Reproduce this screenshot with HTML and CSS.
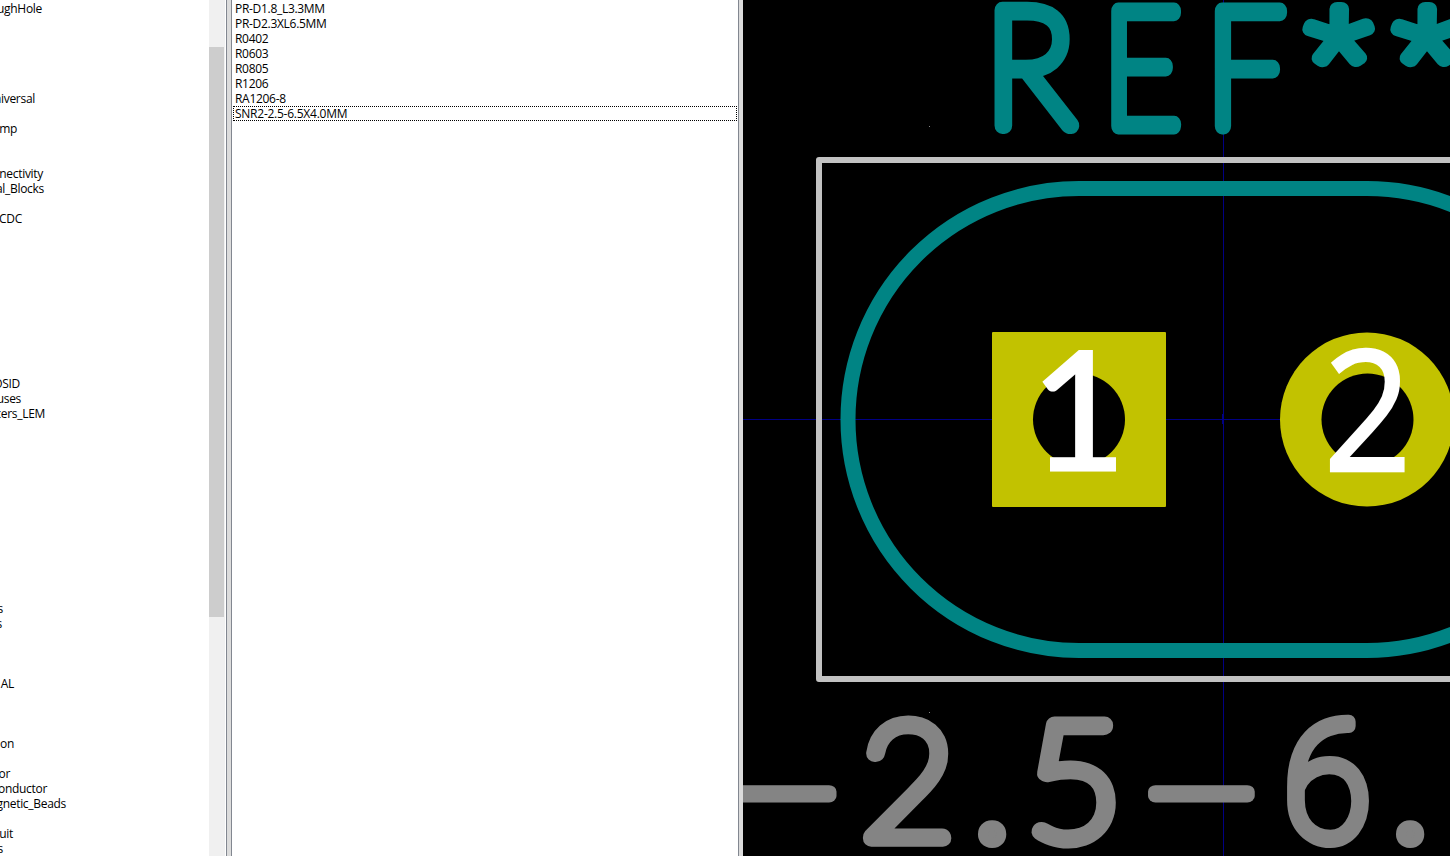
FILE: index.html
```html
<!DOCTYPE html>
<html lang="en">
<head>
<meta charset="utf-8">
<title>Footprint Library Browser</title>
<link rel="stylesheet" href="styles.css">
</head>
<body>
<main class="browser">
  <section class="libraries">
    <div class="tree">
      <div class="row" style="width:42px;grid-row:1">ughHole</div>
      <div class="row" style="width:35px;grid-row:7">niversal</div>
      <div class="row" style="width:17px;grid-row:9">mp</div>
      <div class="row" style="width:43px;grid-row:12">nectivity</div>
      <div class="row" style="width:44px;grid-row:13">al_Blocks</div>
      <div class="row" style="width:22px;grid-row:15">CDC</div>
      <div class="row" style="width:20px;grid-row:26">OSID</div>
      <div class="row" style="width:21px;grid-row:27">uses</div>
      <div class="row" style="width:45px;grid-row:28">cers_LEM</div>
      <div class="row" style="width:3px;grid-row:41">s</div>
      <div class="row" style="width:2px;grid-row:42">s</div>
      <div class="row" style="width:14px;grid-row:46">AL</div>
      <div class="row" style="width:14px;grid-row:50">on</div>
      <div class="row" style="width:10px;grid-row:52">or</div>
      <div class="row" style="width:47px;grid-row:53">onductor</div>
      <div class="row" style="width:66px;grid-row:54">gnetic_Beads</div>
      <div class="row" style="width:13px;grid-row:56">uit</div>
      <div class="row" style="width:3px;grid-row:57">s</div>
    </div>
    <div class="scrollbar"><div class="thumb"></div></div>
  </section>
  <div class="sash"></div>
  <section class="footprints">
    <div class="item">PR-D1.8_L3.3MM</div>
    <div class="item">PR-D2.3XL6.5MM</div>
    <div class="item">R0402</div>
    <div class="item">R0603</div>
    <div class="item">R0805</div>
    <div class="item">R1206</div>
    <div class="item">RA1206-8</div>
    <div class="item focused">SNR2-2.5-6.5X4.0MM</div>
  </section>
  <div class="sash right"></div>
  <svg class="canvas" viewBox="743 0 707 856" width="707" height="856">
    <g class="grid" shape-rendering="crispEdges">
      <rect x="929" y="126" width="1" height="1"/>
      <rect x="929" y="712" width="1" height="1"/>
    </g>
    <path class="axis" d="M743 419.5H1450M1223.5 0V856M1222.5 414V424" shape-rendering="crispEdges"/>
    <path class="courtyard" d="M1460 160H819V679H1460"/>
    <path class="outline" d="M1367 188.5H1079A231 231 0 0 0 1079 650.5H1367A231 231 0 0 0 1367 188.5Z"/>
    <g class="silk">
      <text class="hair" transform="translate(984.8 125.5) scale(.93 1)">R</text>
      <text class="hair" transform="translate(1102.4 125.5) scale(.83 1)">E</text>
      <text class="hair" transform="translate(1205.8 125.5) scale(.86 1)">F</text>
      <text class="star" transform="translate(1338.5 102.5) scale(.89 .8)">*</text>
      <text class="star" transform="translate(1426.5 102.5) scale(.89 .8)">*</text>
    </g>
    <g class="fab">
      <text class="dash" transform="translate(783.5 854) scale(1.15 1)">–</text>
      <text class="hair" transform="translate(860.5 838.5)">2</text>
      <text class="dot" x="993" y="841.5">.</text>
      <text class="hair" transform="translate(1026 838.5) scale(1.02 1)">5</text>
      <text class="dash" transform="translate(1201.8 854) scale(1.15 1)">–</text>
      <text transform="translate(1284 838.5) scale(.97 1)">6</text>
      <text class="dot" x="1411" y="841.5">.</text>
    </g>
    <rect class="pad" x="992" y="332" width="174" height="175" rx="1"/>
    <circle class="pad" cx="1367" cy="419.5" r="87"/>
    <circle class="hole" cx="1079" cy="419.5" r="46"/>
    <circle class="hole" cx="1367.5" cy="419.5" r="46"/>
    <g class="number">
      <text class="one" x="1031" y="470">1</text>
      <text class="two" transform="translate(1323.5 471) scale(.92 1)">2</text>
    </g>
  </svg>
</main>
</body>
</html>
```
FILE: styles.css
```css
body { margin: 0; overflow: hidden; }
.browser {
  display: grid;
  grid-template-columns: 226px 6px 506px 5px 707px;
  width: 1450px;
  height: 856px;
  overflow: hidden;
  background: #fff;
  color: #000;
  font: 12px/15px "Open Sans", "Noto Sans", sans-serif;
  letter-spacing: -0.3px;
}
.libraries { display: flex; height: 856px; overflow: hidden; }
.tree {
  display: grid;
  grid-template-rows: repeat(57, 15px);
  grid-template-columns: 209px;
  padding-top: 1px;
  height: 855px;
}
.row { display: flex; justify-content: flex-end; white-space: nowrap; }
.scrollbar { width: 16px; background: #f0f0f0; padding-top: 47px; height: 809px; }
.thumb { width: 15px; height: 570px; background: #cdcdcd; }
.sash { box-sizing: border-box; background: #dcdcdc; border: solid #828790; border-width: 0 1px; }
.sash.right { border-right: 0; }
.footprints { padding: 1px 1px 0; overflow: hidden; }
.item { height: 15px; padding-left: 2px; white-space: nowrap; box-sizing: border-box; }
.focused { outline: 1px dotted #000; outline-offset: -1px; letter-spacing: -0.25px; }
.canvas { display: block; background: #000; letter-spacing: 0; }
.grid { fill: #848484; }
.axis { stroke: #000084; stroke-width: 1; fill: none; }
.courtyard { stroke: #c2c2c2; stroke-width: 6; fill: none; stroke-linejoin: round; }
.outline { stroke: #008484; stroke-width: 15; fill: none; }
.pad { fill: #c2c200; }
.hole { fill: #000; }
.silk, .fab {
  font: 100 164px Roboto, Inter, sans-serif;
  stroke-width: 14px;
  stroke-linejoin: round;
}
.silk { fill: #008484; stroke: #008484; }
.fab { fill: #848484; stroke: #848484; font-size: 163px; }
.hair { font-family: Lato, sans-serif; stroke-width: 17px; }
.fab .dot { font-weight: 400; stroke-width: 10px; text-anchor: middle; }
.fab .dash { stroke-width: 13px; text-anchor: middle; }
.silk .star { text-anchor: middle; stroke-width: 17.5px; }
.number { fill: #fff; stroke: #fff; }
.one { font: 164px Lato, sans-serif; stroke-width: 3px; }
.two { font: 168px "Open Sans", sans-serif; stroke-width: 2.5px; }
```
